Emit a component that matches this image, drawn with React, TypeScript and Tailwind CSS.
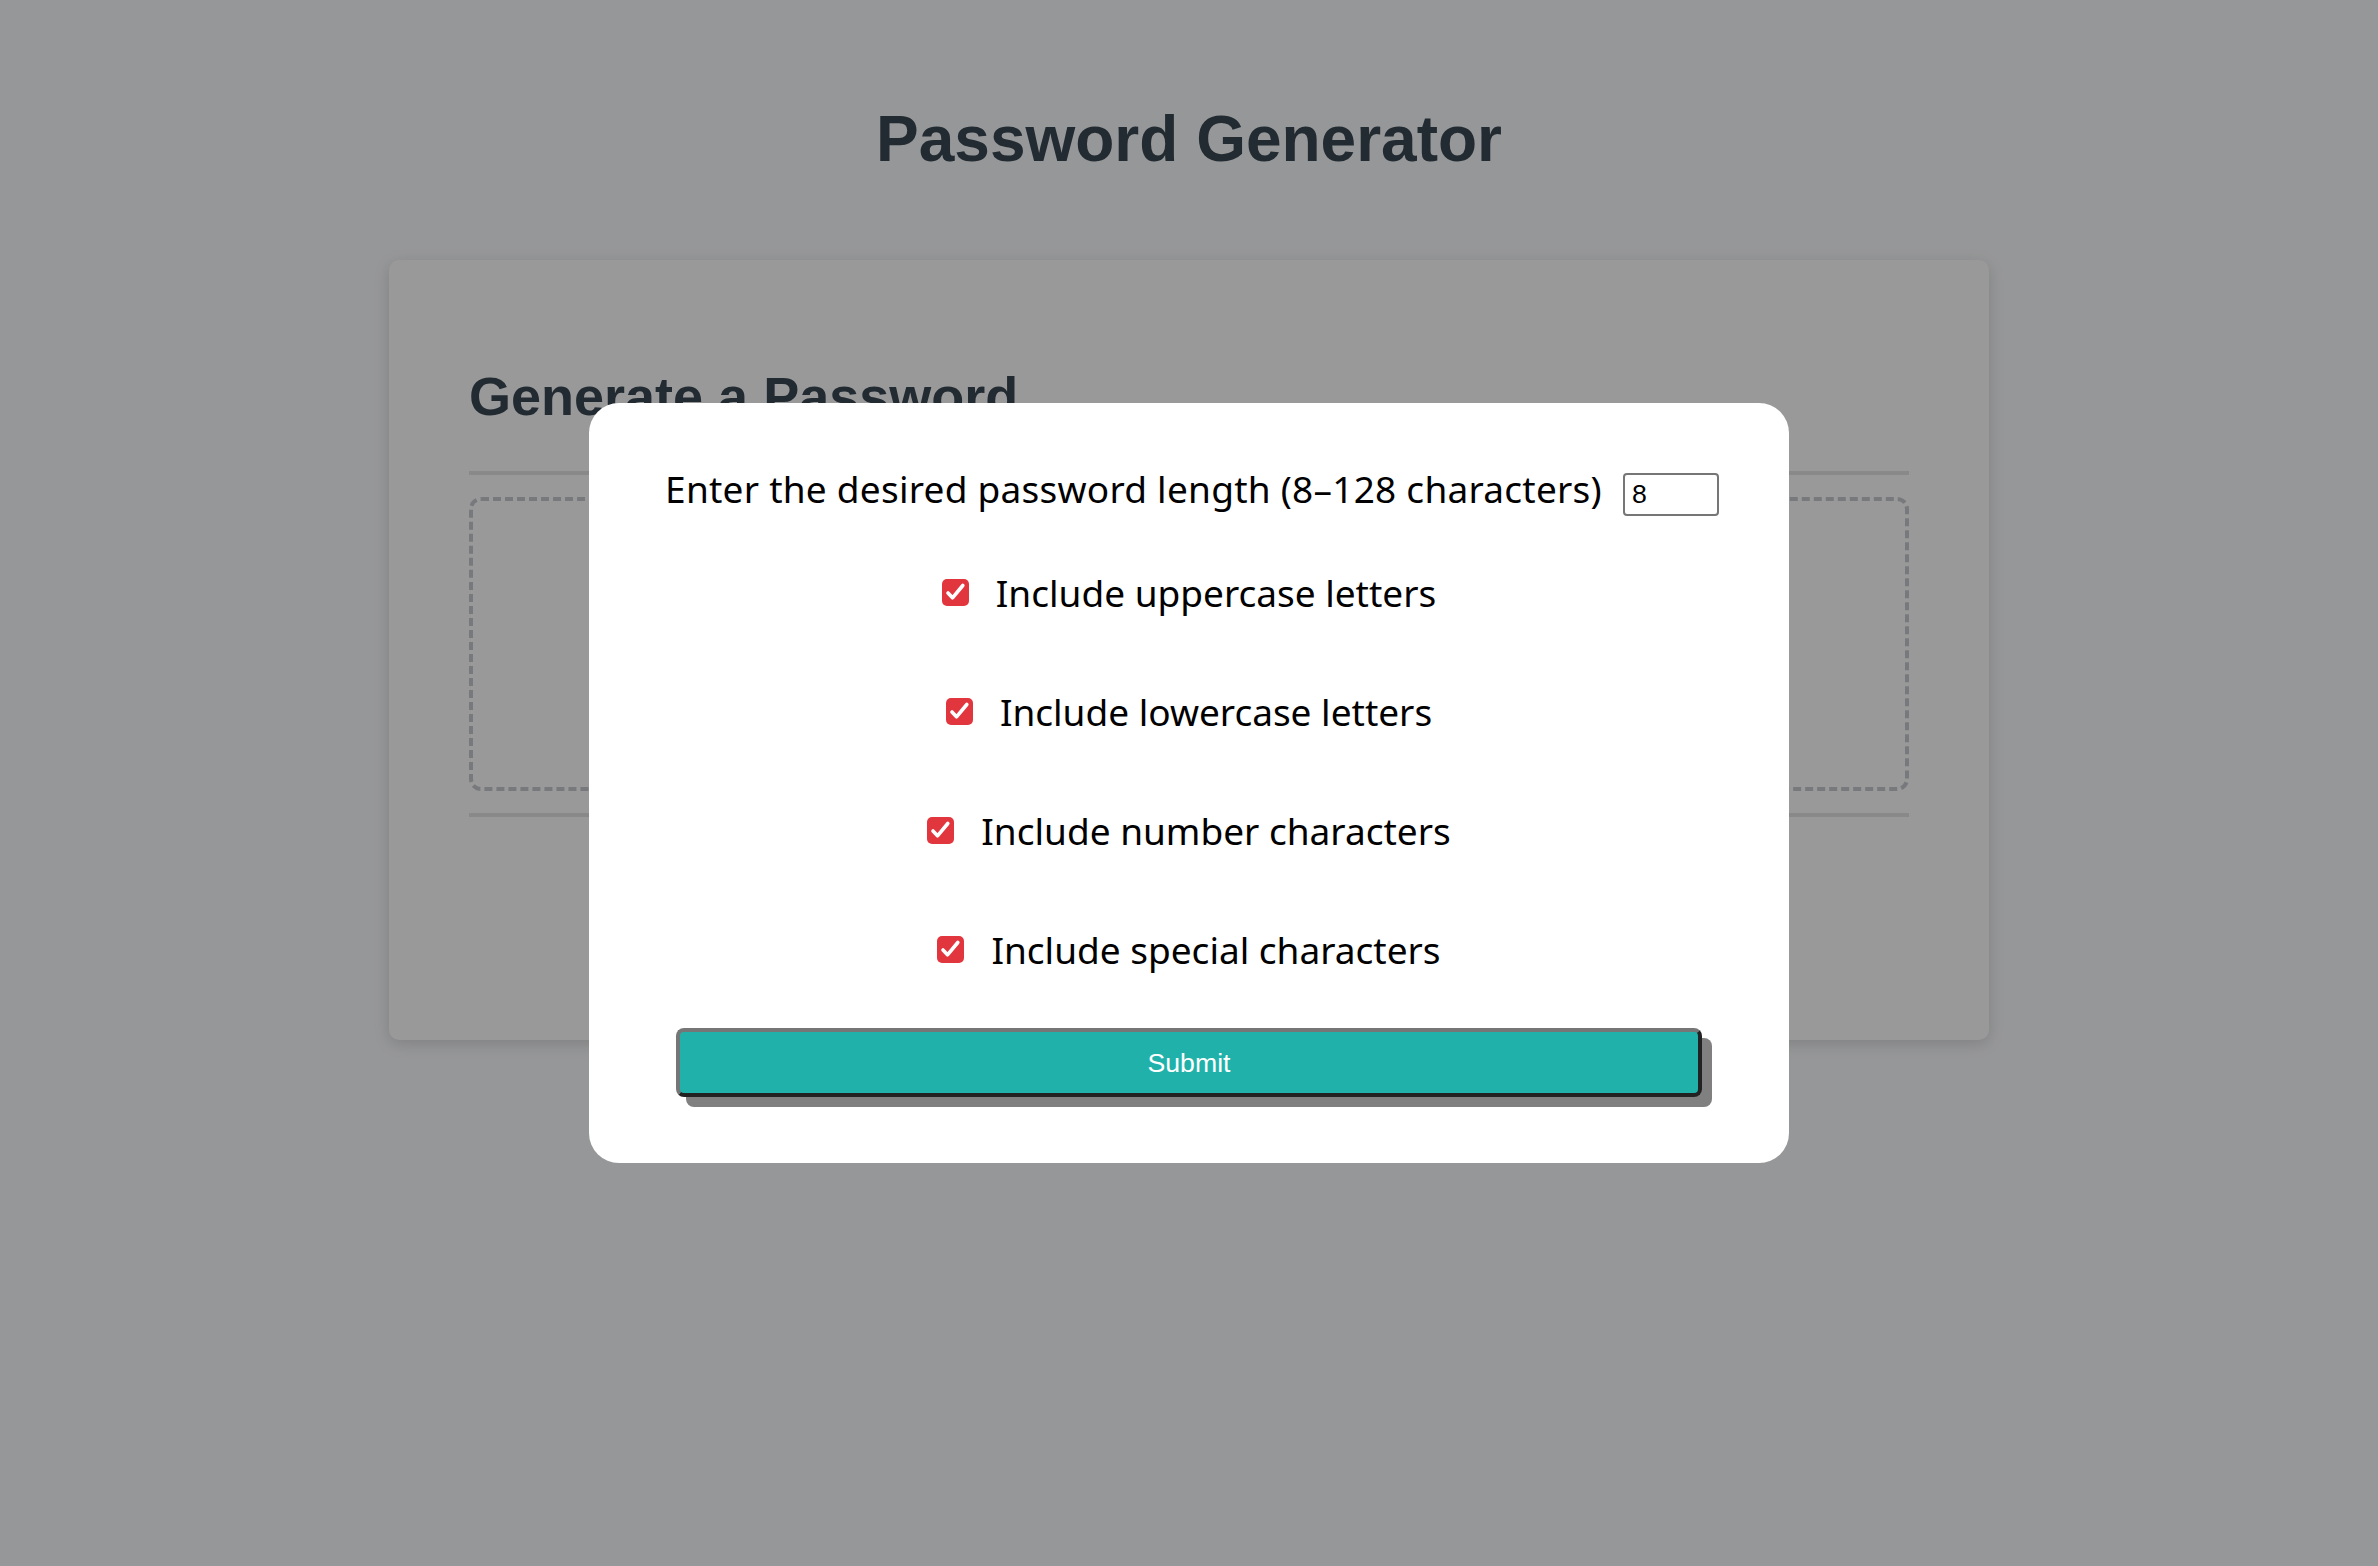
import React from 'react';

const options = [
  'Include uppercase letters',
  'Include lowercase letters',
  'Include number characters',
  'Include special characters',
];

function CheckMark() {
  return (
    <span className="flex h-[27px] w-[27px] shrink-0 items-center justify-center rounded-[5px] bg-[#e2363f]">
      <svg width="27" height="27" viewBox="0 0 27 27" fill="none">
        <polyline
          points="6,14 10.5,18.8 20.8,6.5"
          stroke="white"
          strokeWidth="3.6"
          strokeLinecap="round"
          strokeLinejoin="round"
        />
      </svg>
    </span>
  );
}

export default function App() {
  return (
    <div className="relative min-h-screen bg-[#fbfcfe] font-['Liberation_Sans',Arial,sans-serif]">
      <h1 className="pt-[103px] text-center text-[64px] font-bold leading-[73px] text-[#3b4954]">
        Password Generator
      </h1>

      <div className="mx-auto mt-[84px] h-[780px] w-[1600px] rounded-[10px] bg-white px-[80px] shadow-[0_4px_16px_rgba(0,0,0,0.15)]">
        <div className="border-b-4 border-[#e4e4e4] pt-[105px] pb-[44px]">
          <h2 className="text-[54px] font-bold leading-[62px] text-[#3b4954]">
            Generate a Password
          </h2>
        </div>
        <div className="mt-[22px] h-[294px] rounded-[12px] border-4 border-dashed border-[#c8cad0]" />
        <div className="mt-[22px] border-t-4 border-[#e4e4e4]" />
      </div>

      {/* modal */}
      <div className="fixed inset-0 flex items-center justify-center bg-black/40">
        <div className="flex h-[760px] w-[1200px] flex-col items-center rounded-[30px] bg-white pt-[56px] font-['Noto_Sans',sans-serif] text-black">
          <div className="flex h-[60px] items-center justify-center gap-[21px]">
            <label className="ml-[6px] text-[37px] leading-[48px] tracking-[0.25px]">
              Enter the desired password length (8–128 characters)
            </label>
            <input
              type="text"
              defaultValue="8"
              className="mt-[10px] h-[43px] w-[96px] rounded-[4px] border-2 border-[#767676] px-[7px] font-['Liberation_Sans',Arial,sans-serif] text-[26.67px] text-black outline-none"
            />
          </div>
          <div className="mt-[14px] flex flex-col">
            {options.map((o) => (
              <div key={o} className="flex h-[119px] items-center justify-center gap-[27px]">
                <CheckMark />
                <span className="text-[37px] leading-[48px]">{o}</span>
              </div>
            ))}
          </div>
          <button className="mt-[19px] h-[69px] w-[1026px] rounded-[8px] border-4 border-t-[#767676] border-l-[#767676] border-r-[#222222] border-b-[#222222] bg-[#20b2aa] font-['Liberation_Sans',Arial,sans-serif] text-[26.67px] text-white shadow-[10px_10px_0_#808080]">
            Submit
          </button>
        </div>
      </div>
    </div>
  );
}
